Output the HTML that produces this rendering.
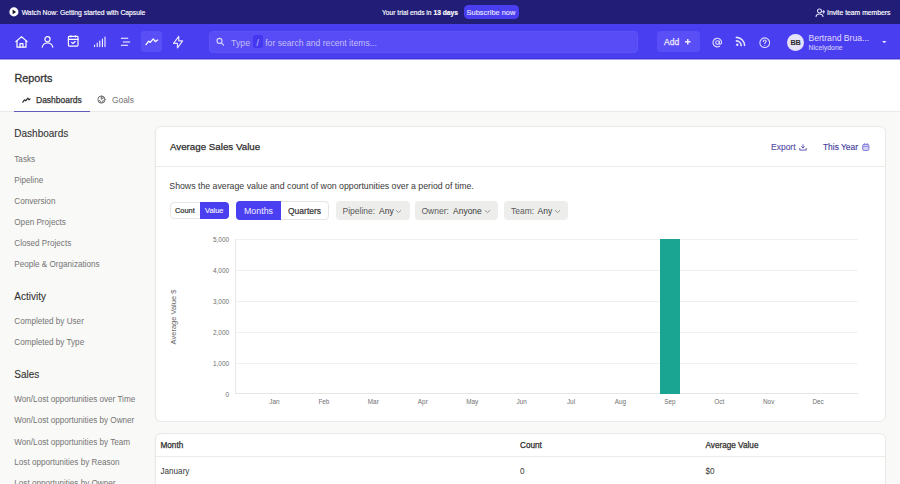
<!DOCTYPE html>
<html><head><meta charset="utf-8">
<style>
*{box-sizing:border-box;margin:0;padding:0}
html,body{width:900px;height:484px;overflow:hidden;background:#f9f9f7;font-family:"Liberation Sans",sans-serif}
.a{position:absolute;white-space:nowrap}
#banner{position:absolute;left:0;top:0;width:900px;height:24px;background:#221e78}
#nav{position:absolute;left:0;top:24px;width:900px;height:35px;background:#4a3ef1;border-bottom:1px solid #3f33d6}
#navb{position:absolute;left:0;top:59px;width:900px;height:1px;background:#a7a0f4}
#head{position:absolute;left:0;top:60px;width:900px;height:52px;background:#fff;border-bottom:1px solid #ebeae7}
.side-h{position:absolute;left:14.3px;font-size:10px;color:#333;white-space:nowrap;-webkit-text-stroke:0.1px #333}
.side-i{position:absolute;left:14.3px;font-size:8.15px;color:#747474;white-space:nowrap}
.card{position:absolute;background:#fff;border:1px solid #e9e9e7;border-radius:6px;box-shadow:-0.5px 0 0 #f1f1ef}
.ylab{position:absolute;right:0;font-size:6.4px;color:#6e6e6e;margin-top:0.9px;text-align:right;width:30px;line-height:8px}
.grid{position:absolute;left:236px;width:622px;height:1px;background:#f1f0ef}
.mon{position:absolute;top:398.2px;width:30px;margin-left:-15px;text-align:center;font-size:6.4px;color:#707070;line-height:8px}
.pill{position:absolute;top:201px;height:19px;background:#ededeb;border-radius:4px}
.pill span{position:absolute;top:0.7px;line-height:19px;font-size:8.5px;white-space:nowrap}
</style></head><body>
<div id="banner">
  <svg class="a" style="left:9.3px;top:7.3px" width="10" height="10" viewBox="0 0 10 10"><circle cx="4.9" cy="4.9" r="4.55" fill="#fff"/><path d="M3.6 2.6 L7.1 4.9 L3.6 7.2 Z" fill="#151515"/></svg>
  <div class="a" style="left:21.7px;top:8.6px;font-size:6.8px;color:#fff;line-height:8px;-webkit-text-stroke:0.15px #fff">Watch Now: Getting started with Capsule</div>
  <div class="a" style="left:382px;top:8.6px;font-size:6.7px;color:#fff;line-height:8px;-webkit-text-stroke:0.15px #fff">Your trial ends in <b>13 days</b></div>
  <div class="a" style="left:464px;top:4.8px;width:54.5px;height:14.3px;border-radius:4.5px;background:#4a3ef1"></div>
  <div class="a" style="left:466.6px;top:6.9px;font-size:7.45px;line-height:12px;color:#ebe9ff;-webkit-text-stroke:0.1px #ebe9ff">Subscribe now</div>
  <svg class="a" style="left:814.5px;top:7.5px" width="10" height="10" viewBox="0 0 10 10" fill="none" stroke="#e0ddff" stroke-width="1.05" stroke-linecap="round"><circle cx="4.5" cy="2.9" r="2"/><path d="M1 8.6 C1.2 6.6 2.6 5.9 4.5 5.9 C6.4 5.9 7.8 6.6 8 8.6"/><path d="M8.7 2.5 V5.1 M7.4 3.8 H10"/></svg>
  <div class="a" style="left:827px;top:8.6px;font-size:6.8px;color:#fff;line-height:8px;-webkit-text-stroke:0.15px #fff">Invite team members</div>
</div>
<div id="nav">
  <!-- home -->
  <svg class="a" style="left:15px;top:12px" width="13" height="12" viewBox="0 0 13 12" fill="none" stroke="#fff" stroke-width="1.2" stroke-linejoin="round" stroke-linecap="round"><path d="M0.8 5.6 L6.5 0.8 L12.2 5.6"/><path d="M2 4.8 V11.2 H11 V4.8"/><path d="M5 11.2 V7.6 H8 V11.2"/></svg>
  <!-- person -->
  <svg class="a" style="left:41px;top:12px" width="13" height="12" viewBox="0 0 13 12" fill="none" stroke="#fff" stroke-width="1.2" stroke-linecap="round"><circle cx="6.5" cy="3.3" r="2.6"/><path d="M1.2 11.2 C1.8 8 3.8 7 6.5 7 C9.2 7 11.2 8 11.8 11.2"/></svg>
  <!-- calendar check -->
  <svg class="a" style="left:66.9px;top:11.3px" width="13" height="12" viewBox="0 0 13 12" fill="none" stroke="#fff" stroke-width="1.15" stroke-linecap="round" stroke-linejoin="round"><rect x="1.4" y="1.4" width="9.6" height="9.7" rx="0.9"/><path d="M1.4 4.3 H11 M3.9 0.7 V2 M8.5 0.7 V2"/><path d="M4.6 7.4 L5.9 8.5 L8.1 6.5"/></svg>
  <!-- signal bars -->
  <svg class="a" style="left:93px;top:12px" width="13" height="12" viewBox="0 0 13 12" fill="none" stroke="#fff" stroke-width="1.05" stroke-linecap="round"><path d="M1.6 10.6 V9 M4.2 10.6 V7 M6.8 10.6 V5 M9.4 10.6 V3 M12 10.6 V1"/></svg>
  <!-- list -->
  <svg class="a" style="left:120px;top:12px" width="12" height="12" viewBox="0 0 12 12" fill="none" stroke="#fff" stroke-width="1.05" stroke-linecap="round"><path d="M1.3 2.3 H7.8 M3.3 5.9 H9.8 M1.3 9.2 H7.6"/></svg>
  <!-- active -->
  <div class="a" style="left:141px;top:7px;width:21px;height:21px;border-radius:3px;background:#5a4ff6"></div>
  <svg class="a" style="left:145px;top:13px" width="14" height="9" viewBox="0 0 14 9" fill="none" stroke="#fff" stroke-width="1.3" stroke-linecap="round" stroke-linejoin="round"><path d="M1 7.6 L3.7 4.2 L5.2 5.4 L8.3 1.9 L10.3 4.6 L12.6 3"/></svg>
  <!-- lightning -->
  <svg class="a" style="left:172px;top:10.8px" width="12.2" height="14.2" viewBox="3 1 18 22" fill="none" stroke="#e6e3ff" stroke-width="1.8" stroke-linejoin="round" stroke-linecap="round"><path d="M13 3 V10 H19 L11 21 V14 H5 Z"/></svg>
  <!-- search -->
  <div class="a" style="left:208.5px;top:6.5px;width:429px;height:22.5px;border-radius:4px;background:#574cf5;border:1px solid #5d53f6"></div>
  <svg class="a" style="left:216px;top:13px" width="10" height="10" viewBox="0 0 10 10" fill="none" stroke="#dcd9ff" stroke-width="1.1" stroke-linecap="round"><circle cx="3.5" cy="3.9" r="2.5"/><path d="M5.4 5.8 L7.6 8.1"/></svg>
  <div class="a" style="left:231px;top:7.7px;line-height:22px;font-size:8.8px;color:#c3befc">Type</div>
  <div class="a" style="left:252.6px;top:10.6px;width:10.4px;height:13.6px;border-radius:2.5px;background:#4437ef"></div>
  <div class="a" style="left:252.6px;top:12.6px;width:10.4px;color:#d0ccff;font-size:8.5px;line-height:12px;text-align:center">/</div>
  <div class="a" style="left:265.2px;top:7.7px;line-height:22px;font-size:8.65px;color:#c3befc">for search and recent items...</div>
  <!-- add -->
  <div class="a" style="left:657px;top:7px;width:43px;height:21px;border-radius:4px;background:#5a4ff6"></div>
  <div class="a" style="left:664px;top:8px;line-height:21px;font-size:8.5px;color:#eceaff;-webkit-text-stroke:0.25px #eceaff">Add</div>
  <svg class="a" style="left:683.8px;top:14px" width="7.5" height="7.5" viewBox="0 0 8 8" stroke="#eceaff" stroke-width="1.6"><path d="M4 1 V7 M1 4 H7"/></svg>
  <!-- at -->
  <svg class="a" style="left:711.5px;top:12.8px" width="11" height="11" viewBox="0 0 11 11" fill="none" stroke="#dcd9ff" stroke-width="1.15" stroke-linecap="round"><circle cx="5.5" cy="5.5" r="1.8"/><path d="M7.3 4 V6.2 C7.3 7.5 9.6 7.5 9.6 5.5 A4.3 4.3 0 1 0 7.6 9.2"/></svg>
  <!-- rss -->
  <svg class="a" style="left:734.8px;top:12.3px" width="11" height="11" viewBox="0 0 11 11" fill="none" stroke="#e8e6ff" stroke-width="1.6" stroke-linecap="round"><path d="M1.4 1.4 A8.4 8.4 0 0 1 9.6 9.4"/><path d="M1.4 4.9 A5 5 0 0 1 6.2 9.6"/><circle cx="2.3" cy="8.7" r="1.2" fill="#e8e6ff" stroke="none"/></svg>
  <!-- help -->
  <svg class="a" style="left:758.8px;top:12.6px" width="11.5" height="11.5" viewBox="0 0 12 12" fill="none" stroke="#dcd9ff" stroke-width="1.15" stroke-linecap="round"><circle cx="6" cy="6" r="5.1"/><path d="M4.5 4.6 C4.5 3.7 5.2 3.1 6 3.1 C6.9 3.1 7.5 3.7 7.5 4.5 C7.5 5.5 6 5.7 6 6.8"/><circle cx="6" cy="8.6" r="0.6" fill="#dcd9ff" stroke="none"/></svg>
  <!-- avatar -->
  <div class="a" style="left:787px;top:9.8px;width:16.8px;height:16.8px;border-radius:50%;background:#e6e3f9"></div>
  <div class="a" style="left:787px;top:10.6px;width:16.8px;color:#2a2a2a;font-size:7.3px;font-weight:700;letter-spacing:-0.35px;line-height:16px;text-align:center">BB</div>
  <div class="a" style="left:808.5px;top:8.8px;font-size:8.6px;color:#e0ddff;line-height:10px">Bertrand Brua...</div>
  <div class="a" style="left:808.5px;top:19.6px;font-size:6.9px;color:#cdc9ff;line-height:8px;-webkit-text-stroke:0.12px #cdc9ff">Nicelydone</div>
  <svg class="a" style="left:882.2px;top:16.6px" width="4.6" height="2.6" viewBox="0 0 5 3"><path d="M0 0 H5 L2.5 2.8 Z" fill="#e6e4ff"/></svg>
</div>
<div id="navb"></div>
<div id="head">
  <div class="a" style="left:14.5px;top:11.5px;font-size:10.8px;color:#333;-webkit-text-stroke:0.3px #333">Reports</div>
  <svg class="a" style="left:21.5px;top:36.5px" width="9" height="7" viewBox="0 0 9 7" fill="none" stroke="#2a2a2a" stroke-width="1.15" stroke-linecap="round" stroke-linejoin="round"><path d="M0.8 5.1 L2.5 2.8 L3.8 3.9 L5.8 1.1 L7.1 2.8 L8.1 1.9"/></svg>
  <div class="a" style="left:36px;top:35px;font-size:8.5px;line-height:10px;color:#333;-webkit-text-stroke:0.25px #333">Dashboards</div>
  <svg class="a" style="left:97.2px;top:34.6px" width="9" height="9" viewBox="0 0 9 9" fill="none" stroke="#6e6e6e" stroke-width="1" stroke-linecap="round" stroke-linejoin="round"><circle cx="4.5" cy="4.6" r="3.6"/><path d="M4.3 1.2 V4.3 L6.4 3 Z"/><path d="M2.6 5.4 A1.9 1.9 0 0 0 6.4 5.4"/></svg>
  <div class="a" style="left:112px;top:35px;font-size:8.4px;line-height:10px;color:#727272">Goals</div>
  <div class="a" style="left:14px;top:50.5px;width:76px;height:1.5px;background:#625cb8"></div>
</div>
<div class="side-h" style="top:128.2px">Dashboards</div>
<div class="side-i" style="top:154.9px">Tasks</div>
<div class="side-i" style="top:175.9px">Pipeline</div>
<div class="side-i" style="top:197.1px">Conversion</div>
<div class="side-i" style="top:218.1px">Open Projects</div>
<div class="side-i" style="top:239.0px">Closed Projects</div>
<div class="side-i" style="top:260.0px">People &amp; Organizations</div>
<div class="side-h" style="top:290.6px">Activity</div>
<div class="side-i" style="top:317.1px">Completed by User</div>
<div class="side-i" style="top:338.0px">Completed by Type</div>
<div class="side-h" style="top:368.6px">Sales</div>
<div class="side-i" style="top:395.3px">Won/Lost opportunities over Time</div>
<div class="side-i" style="top:416.1px">Won/Lost opportunities by Owner</div>
<div class="side-i" style="top:437.6px">Won/Lost opportunities by Team</div>
<div class="side-i" style="top:458.4px">Lost opportunities by Reason</div>
<div class="side-i" style="top:479.3px">Lost opportunities by Owner</div>

<!-- chart card -->
<div class="card" style="left:155px;top:126px;width:731px;height:295.5px"></div>
<div class="a" style="left:156px;top:166px;width:729px;height:1px;background:#ecebe8"></div>
<div class="a" style="left:170px;top:140.7px;font-size:9.75px;color:#2c2c2c;line-height:12px;-webkit-text-stroke:0.25px #2c2c2c">Average Sales Value</div>
<div class="a" style="left:771px;top:141.8px;font-size:8.5px;color:#4f49a6;line-height:11px;-webkit-text-stroke:0.1px #4f49a6">Export</div>
<svg class="a" style="left:799.2px;top:144px" width="8" height="7" viewBox="0 0 8 7" fill="none" stroke="#5a54b0" stroke-width="0.95" stroke-linecap="round" stroke-linejoin="round"><path d="M4 0.7 V3.9 M2.6 2.6 L4 4 L5.4 2.6 M0.8 4.4 V6.1 H7.2 V4.4"/></svg>
<div class="a" style="left:823px;top:141.8px;font-size:8.4px;color:#433d9c;line-height:11px;-webkit-text-stroke:0.15px #433d9c">This Year</div>
<svg class="a" style="left:862.4px;top:142.8px" width="7.6" height="8.2" viewBox="0 0 7.6 8.2" fill="none"><rect x="0.7" y="1.3" width="6.2" height="6.2" rx="1.4" fill="#d6d3f5" stroke="#807bd8" stroke-width="1"/><path d="M2.4 0.3 V2 M5.2 0.3 V2" stroke="#807bd8" stroke-width="1"/><path d="M0.9 3.4 H6.7" stroke="#807bd8" stroke-width="0.8"/></svg>
<div class="a" style="left:169.3px;top:181.1px;font-size:8.76px;color:#383838;line-height:11px">Shows the average value and count of won opportunities over a period of time.</div>

<!-- count/value -->
<div class="a" style="left:169.5px;top:201.5px;width:59.5px;height:17.5px;border:1px solid #e6e5e2;border-radius:4px;background:#fff"></div>
<div class="a" style="left:200px;top:201.5px;width:29px;height:17.5px;border-radius:0 4px 4px 0;background:#4a3ef1"></div>
<div class="a" style="left:175px;top:202.2px;line-height:18px;font-size:7.4px;color:#2a2a2a;-webkit-text-stroke:0.2px #2a2a2a">Count</div>
<div class="a" style="left:205px;top:202.2px;line-height:18px;font-size:7.4px;color:#f0efff;-webkit-text-stroke:0.15px #f0efff">Value</div>
<!-- months/quarters -->
<div class="a" style="left:236px;top:201px;width:93px;height:19px;border:1px solid #e6e5e2;border-radius:4px;background:#fff"></div>
<div class="a" style="left:236px;top:201px;width:44.5px;height:19px;border-radius:4px 0 0 4px;background:#4b3ff2"></div>
<div class="a" style="left:244px;top:201.8px;line-height:19px;font-size:8.85px;color:#f0efff">Months</div>
<div class="a" style="left:288px;top:201.8px;line-height:19px;font-size:8.5px;color:#333;-webkit-text-stroke:0.2px #333">Quarters</div>
<!-- pills -->
<div class="pill" style="left:335.5px;width:74px"><span style="left:7px;color:#5a5a5a">Pipeline:</span><span style="left:43.5px;color:#383838">Any</span>
<svg style="position:absolute;left:59.8px;top:8px" width="7" height="5" viewBox="0 0 7 5" fill="none" stroke="#888" stroke-width="0.85"><path d="M0.9 1.2 L3.5 3.6 L6.1 1.2"/></svg></div>
<div class="pill" style="left:414.5px;width:83.5px"><span style="left:7px;color:#5a5a5a">Owner:</span><span style="left:38.5px;color:#383838">Anyone</span>
<svg style="position:absolute;left:69.3px;top:8px" width="7" height="5" viewBox="0 0 7 5" fill="none" stroke="#888" stroke-width="0.85"><path d="M0.9 1.2 L3.5 3.6 L6.1 1.2"/></svg></div>
<div class="pill" style="left:503.5px;width:64.5px"><span style="left:7.5px;color:#5a5a5a">Team:</span><span style="left:34px;color:#383838">Any</span>
<svg style="position:absolute;left:50.8px;top:8px" width="7" height="5" viewBox="0 0 7 5" fill="none" stroke="#888" stroke-width="0.85"><path d="M0.9 1.2 L3.5 3.6 L6.1 1.2"/></svg></div>

<!-- chart -->
<div class="a" style="left:199px;top:235px;width:30px;height:170px">
  <div class="ylab" style="top:0.5px">5,000</div>
  <div class="ylab" style="top:31px">4,000</div>
  <div class="ylab" style="top:62px">3,000</div>
  <div class="ylab" style="top:93px">2,000</div>
  <div class="ylab" style="top:124px">1,000</div>
  <div class="ylab" style="top:155px">0</div>
</div>
<div class="grid" style="top:239px"></div>
<div class="grid" style="top:270px"></div>
<div class="grid" style="top:301px"></div>
<div class="grid" style="top:332px"></div>
<div class="grid" style="top:363px"></div>
<div class="a" style="left:235px;top:239px;width:1px;height:155px;background:#e8e7e5"></div>
<div class="a" style="left:235px;top:393.3px;width:623px;height:1.2px;background:#e6e6e4"></div>
<div class="a" style="left:660px;top:239px;width:20px;height:155px;background:#1aa592"></div>
<div class="mon" style="left:274.5px">Jan</div>
<div class="mon" style="left:323.9px">Feb</div>
<div class="mon" style="left:373.3px">Mar</div>
<div class="mon" style="left:422.8px">Apr</div>
<div class="mon" style="left:472.2px">May</div>
<div class="mon" style="left:521.6px">Jun</div>
<div class="mon" style="left:571.0px">Jul</div>
<div class="mon" style="left:620.4px">Aug</div>
<div class="mon" style="left:669.9px">Sep</div>
<div class="mon" style="left:719.3px">Oct</div>
<div class="mon" style="left:768.7px">Nov</div>
<div class="mon" style="left:818.1px">Dec</div>
<div class="a" style="left:173.6px;top:316.5px;width:0;height:0">
  <div style="position:absolute;left:-40px;top:-4px;width:80px;text-align:center;font-size:7.5px;color:#666;line-height:8px;transform:rotate(-90deg)">Average Value $</div>
</div>

<!-- table card -->
<div class="card" style="left:155px;top:433.3px;width:731px;height:80px"></div>
<div class="a" style="left:156px;top:456px;width:729px;height:1px;background:#ecebe8"></div>
<div class="a" style="left:160.5px;top:440.8px;font-size:8.2px;color:#2e2e2e;line-height:10px;-webkit-text-stroke:0.25px #2e2e2e">Month</div>
<div class="a" style="left:520px;top:440.8px;font-size:8.2px;color:#2e2e2e;line-height:10px;-webkit-text-stroke:0.25px #2e2e2e">Count</div>
<div class="a" style="left:705.5px;top:440.8px;font-size:8.2px;color:#2e2e2e;line-height:10px;-webkit-text-stroke:0.25px #2e2e2e">Average Value</div>
<div class="a" style="left:160.5px;top:466.8px;font-size:8.15px;color:#383838;line-height:10px">January</div>
<div class="a" style="left:520px;top:466.8px;font-size:8.15px;color:#383838;line-height:10px">0</div>
<div class="a" style="left:705.5px;top:466.8px;font-size:8.15px;color:#383838;line-height:10px">$0</div>
</body></html>
